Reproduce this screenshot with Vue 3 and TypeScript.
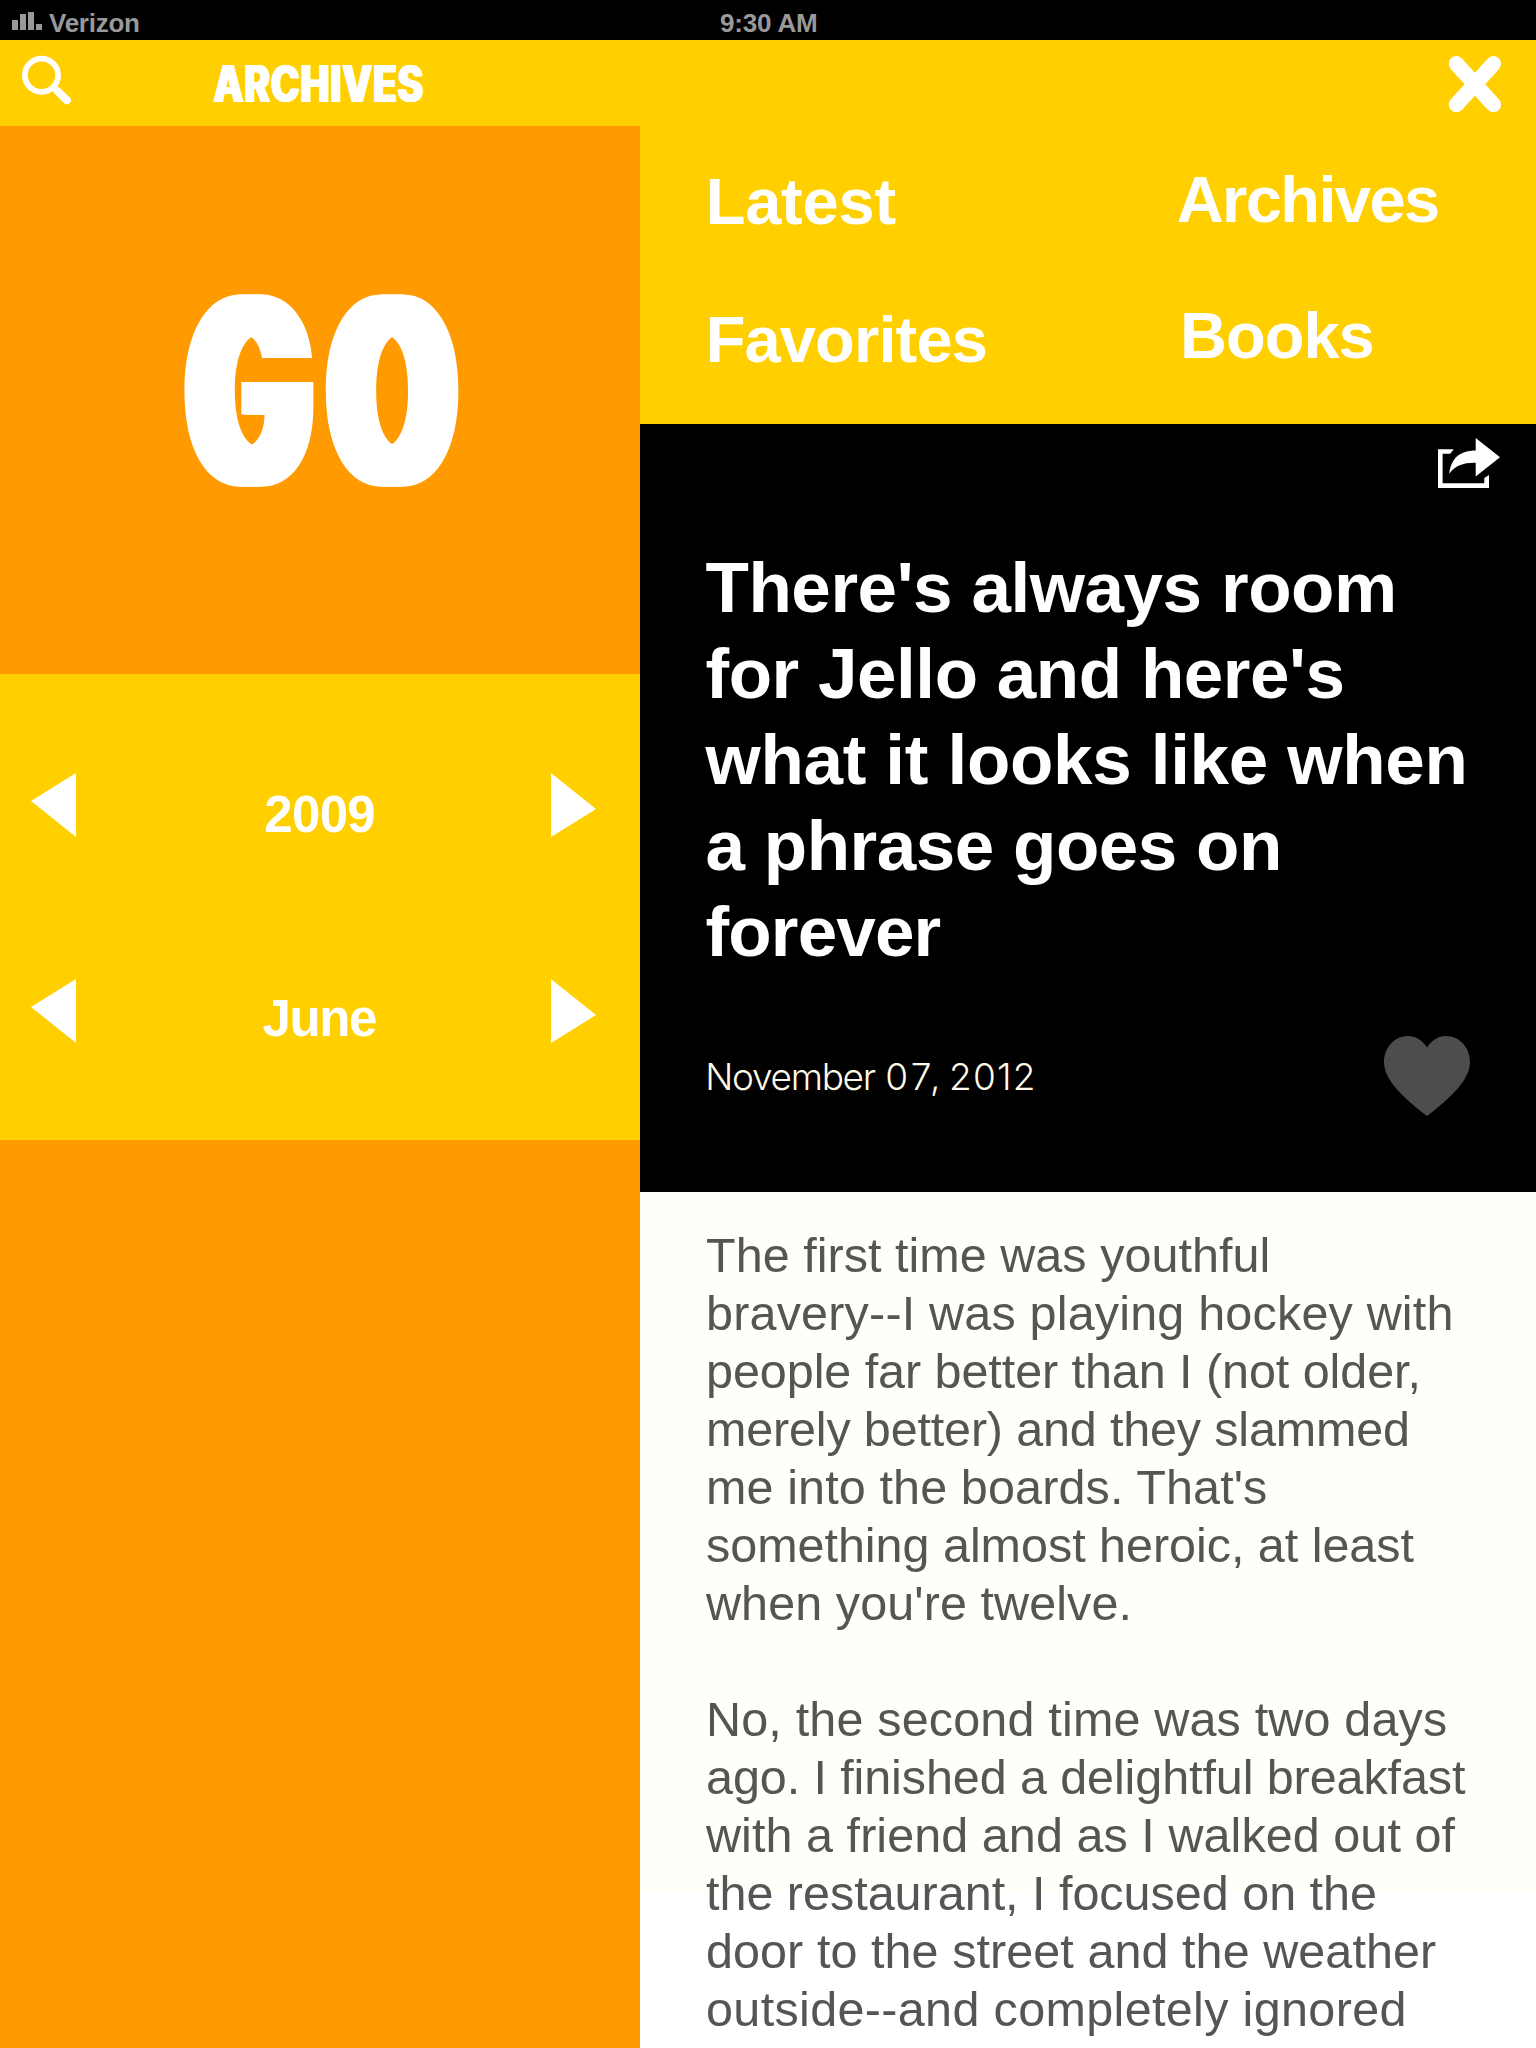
<script setup lang="ts">
import type { Directive } from 'vue'

interface Line { text: string; end: number }

// Tracks a single line so its glyphs span from `start` (optional) to `end`,
// both measured from the left edge of the line's container.
const vFit: Directive<HTMLElement, { start?: number; end: number }> = {
  mounted(el, { value }) {
    const text = (el.textContent ?? '').trim()
    const ctx = document.createElement('canvas').getContext('2d')
    if (!ctx || text.length < 2) return
    ctx.font = getComputedStyle(el).font
    const m = ctx.measureText(text)
    const shift = value.start === undefined ? 0 : value.start + m.actualBoundingBoxLeft
    const spacing = (value.end - shift - m.actualBoundingBoxRight) / (text.length - 1)
    el.style.letterSpacing = `${spacing.toFixed(3)}px`
    el.style.marginLeft = `${shift.toFixed(2)}px`
  },
}

const links = [
  { text: 'Latest', start: 69.7, end: 255.4, drop: 2 },
  { text: 'Archives', start: 89.7, end: 350, drop: 0 },
  { text: 'Favorites', start: 69.7, end: 345.7, drop: 4 },
  { text: 'Books', start: 96, end: 284.6, drop: 0 },
]

const pickers = [
  { text: '2009', start: 265.3, end: 374.3, label: 'year', drop: 4 },
  { text: 'June', start: 262.5, end: 376, label: 'month', drop: 2 },
]

const title: Line[] = [
  { text: "There's always room", end: 1393 },
  { text: "for Jello and here's", end: 1342.5 },
  { text: 'what it looks like when', end: 1463.5 },
  { text: 'a phrase goes on', end: 1278 },
  { text: 'forever', end: 940.6 },
]

const paragraphs: Line[][] = [
  [
    { text: 'The first time was youthful', end: 1267.5 },
    { text: 'bravery--I was playing hockey with', end: 1450.5 },
    { text: 'people far better than I (not older,', end: 1417.5 },
    { text: 'merely better) and they slammed', end: 1407 },
    { text: "me into the boards. That's", end: 1267 },
    { text: 'something almost heroic, at least', end: 1414.5 },
    { text: "when you're twelve.", end: 1128.5 },
  ],
  [
    { text: 'No, the second time was two days', end: 1446 },
    { text: 'ago. I finished a delightful breakfast', end: 1466 },
    { text: 'with a friend and as I walked out of', end: 1455.5 },
    { text: 'the restaurant, I focused on the', end: 1375 },
    { text: 'door to the street and the weather', end: 1436 },
    { text: 'outside--and completely ignored', end: 1403.5 },
  ],
]
</script>

<template>
  <div class="screen">
    <div class="status">
      <svg class="signal" width="30" height="18" viewBox="0 0 30 18" fill="#999">
        <path d="M0 8h6v10H0zM8 2h6v16H8zM16 0h6v18h-6zM24 12h6v6h-6z" />
      </svg>
      <div class="carrier"><span v-fit="{ start: 49, end: 139 }">Verizon</span></div>
      <div class="clock"><span v-fit="{ start: 80, end: 177 }">9:30 AM</span></div>
    </div>

    <header class="bar">
      <svg class="search" width="56" height="56" viewBox="18 50 56 56" fill="none" stroke="#fff">
        <circle cx="41.5" cy="75.3" r="16.6" stroke-width="5.8" />
        <path d="M53.5 87.3L58 91.7" stroke-width="7" />
        <path d="M58 91.500L67 100.3" stroke-width="8" stroke-linecap="round" />
      </svg>
      <h1 class="heading"><span v-fit="{ start: 1.8, end: 274.8 }">ARCHIVES</span></h1>
      <svg class="close" width="56" height="60" viewBox="1447 54 56 60" stroke="#fff" stroke-width="15.4" stroke-linecap="round">
        <path d="M1456.4 63.8L1493.4 104.6M1493.4 63.8L1456.4 104.6" />
      </svg>
    </header>

    <main class="columns">
      <aside class="side">
        <div class="go"><span v-fit="{ start: 18, end: 426.7 }">GO</span></div>
        <div class="pickers">
          <div v-for="p in pickers" :key="p.label" class="picker">
            <svg width="45" height="64" viewBox="0 0 45 64" fill="#fff"><path d="M45 0V64L0 28z" /></svg>
            <div class="value" :style="{ paddingTop: p.drop + 'px' }">
              <span v-fit="{ start: p.start - 76, end: p.end - 76 }">{{ p.text }}</span>
            </div>
            <svg width="45" height="64" viewBox="0 0 45 64" fill="#fff"><path d="M0 0V64L45 36z" /></svg>
          </div>
        </div>
      </aside>

      <section class="content">
        <nav class="menu">
          <a v-for="l in links" :key="l.text" :style="{ paddingTop: l.drop + 'px' }">
            <span v-fit="{ start: l.start, end: l.end }">{{ l.text }}</span>
          </a>
        </nav>

        <div class="hero">
          <div class="actions">
            <svg width="62" height="50" viewBox="0 0 62 50" fill="#fff">
              <path d="M0 11.3H15.7L12.3 15.8H4.6V45.3H46.3V40L51 37V50H0z" />
              <path d="M37.7 0L62 19.3L37.7 38.4V24.8C26 24.5 17 27.5 11.2 35.8C13.5 19.5 22 12.8 37.7 12.6z" />
            </svg>
          </div>
          <h2 class="title">
            <div v-for="t in title" :key="t.text"><span v-fit="{ end: t.end - 705.5 }">{{ t.text }}</span></div>
          </h2>
          <div class="meta">
            <div class="date">
              <div class="month"><span v-fit="{ start: 2.3, end: 169.7 }">November</span></div>
              <div class="day"><span v-fit="{ start: 1.3, end: 51 }">07,</span></div>
              <div><span v-fit="{ start: 1, end: 82.7 }">2012</span></div>
            </div>
            <svg width="86" height="80" viewBox="0 0 86 80" fill="#4d4d4d">
              <path d="M43 11.5C47.5 4.500 54 0 62 0C75.500 0 86 11.500 86 26C86 44 66 62.500 43 80C20 62.500 0 44 0 26C0 11.500 10.500 0 24 0C32 0 38.500 4.500 43 11.500z" />
            </svg>
          </div>
        </div>

        <article class="story">
          <p v-for="(p, i) in paragraphs" :key="i">
            <span v-for="l in p" :key="l.text" class="row"><span v-fit="{ end: l.end - 706 }">{{ l.text }}</span></span>
          </p>
        </article>
      </section>
    </main>
  </div>
</template>

<style>
body { margin: 0; }
</style>

<style scoped>
.screen {
  width: 1536px;
  height: 2048px;
  overflow: hidden;
  display: flex;
  flex-direction: column;
  background: #ff9a00;
  font-family: "Liberation Sans", Arial, sans-serif;
  color: #fff;
}
.screen span { display: inline-block; white-space: nowrap; }
h1, h2, p { margin: 0; font-weight: inherit; }
svg { display: block; flex: none; }

.status {
  height: 40px;
  flex: none;
  display: grid;
  grid-template-columns: 12px 628px 1fr;
  background: #000;
  color: #999;
  font-weight: 700;
  font-size: 26px;
  line-height: 46px;
}
.signal { grid-area: 1 / 2; margin-top: 12px; }
.carrier { grid-area: 1 / 1 / 2 / 3; }
.clock { grid-area: 1 / 3; }

.bar { height: 86px; flex: none; display: flex; background: #ffcf00; }
.search { margin: 10px 0 0 18px; }
.heading {
  width: 320px;
  margin: 0 934px 0 139px;
  font-family: Inter, "Liberation Sans", sans-serif;
  font-weight: 800;
  font-size: 51px;
  line-height: 87px;
  transform: scaleX(.76);
  transform-origin: 0 0;
  text-shadow: -1.500px 0 #fff, 1.500px 0 #fff;
}
.close { margin: 14px 0 0 -20px; }

.columns { flex: 1; min-height: 0; display: flex; }
.side { width: 640px; flex: none; }
.go {
  width: 500px;
  height: 548px;
  margin-left: 183px;
  font-family: Inter, "Liberation Sans", sans-serif;
  font-weight: 800;
  font-size: 257px;
  line-height: 530px;
  transform: scaleX(.62);
  transform-origin: 0 0;
  text-shadow: -18px 0 #fff, -14px 0 #fff, -10px 0 #fff, -7px 0 #fff, -4px 0 #fff, 4px 0 #fff, 7px 0 #fff, 10px 0 #fff, 14px 0 #fff, 18px 0 #fff;
}
.pickers { height: 466px; box-sizing: border-box; padding: 99px 44px 0 31px; background: #ffcf00; }
.picker { display: flex; height: 206px; }
.value {
  width: 475px;
  font-weight: 700;
  font-size: 51px;
  line-height: 75px;
}

.content { width: 896px; flex: none; display: flex; flex-direction: column; background: #fff; }
.menu {
  height: 298px;
  flex: none;
  box-sizing: border-box;
  padding-top: 33px;
  display: grid;
  grid-template-columns: 448px 448px;
  grid-auto-rows: 136px;
  background: #ffcf00;
  font-weight: 700;
  font-size: 65px;
  line-height: 81px;
}
.hero { height: 768px; flex: none; background: #000; }
.actions { height: 106px; padding: 14px 36px 0 0; display: flex; justify-content: flex-end; }
.title { margin-left: 65.5px; font-weight: 700; font-size: 71px; line-height: 87px; }
.title div { height: 86px; }
.meta { display: flex; justify-content: space-between; padding: 62px 66px 0 66px; }
.date {
  display: flex;
  margin-top: 18px;
  font: 300 37px/46px Inter, "Liberation Sans", sans-serif;
  color: #fffae8;
}
.month { width: 180px; }
.day { width: 64px; }
.story {
  flex: 1;
  padding: 34px 0 0 66px;
  color: #555;
  font-size: 48.500px;
  line-height: 58px;
  background: linear-gradient(#fffef8 0 700px, #fff 700px);
}
.story p { margin-bottom: 58px; }
.story .row { display: block; height: 58px; }
</style>
